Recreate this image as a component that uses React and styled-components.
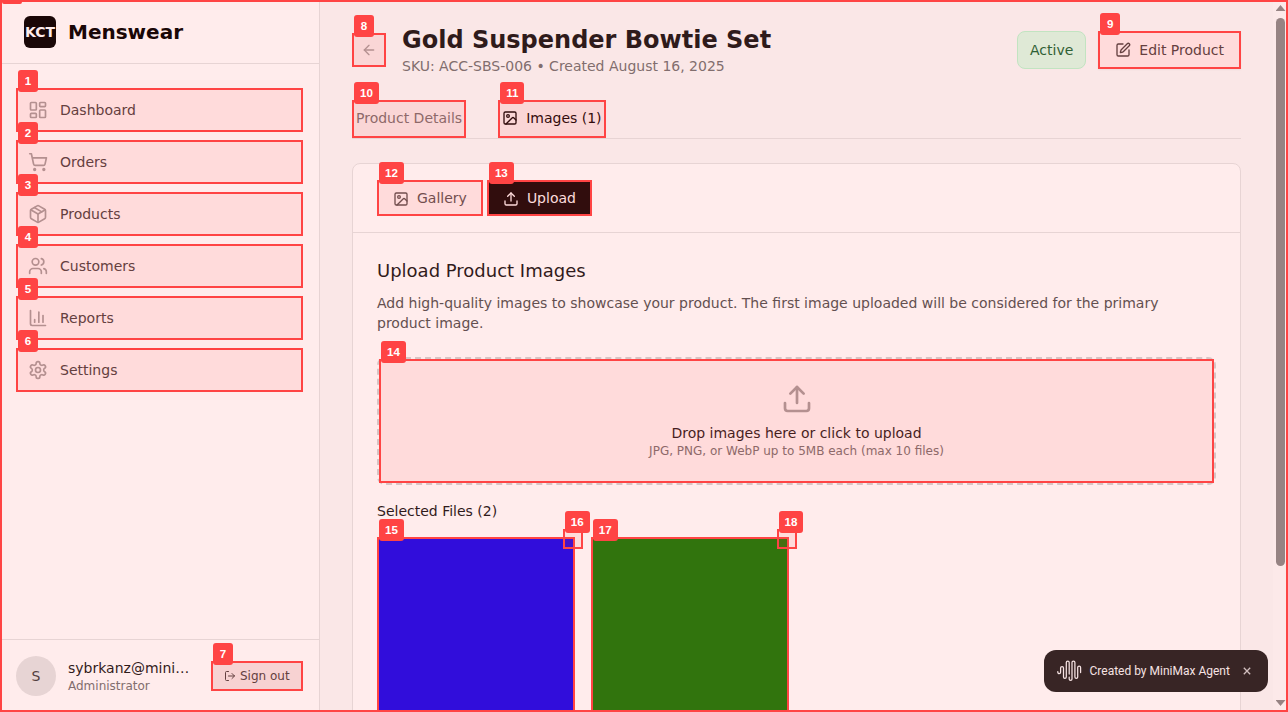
import React from "react";
import styled, { createGlobalStyle, css } from "styled-components";
import {
  LayoutDashboard, ShoppingCart, Package, Users, ChartColumn,
  LogOut, ArrowLeft, SquarePen, Image as ImageIcon, Upload,
} from "lucide-react";

const Global = createGlobalStyle`
  *, *::before, *::after { box-sizing: border-box; }
  body {
    margin: 0;
    overflow: hidden;
    background: #fff;
    color: #171717;
    font-family: "DejaVu Sans", sans-serif;
    font-size: 14px;
    line-height: 20px;
  }
  h1, h2, h3, p { margin: 0; font-weight: 400; }
  button { font: inherit; color: inherit; background: none; border: 0; padding: 0; }
  svg { display: block; flex: none; }
`;

const Screen = styled.div`
  position: relative;
  display: flex;
  width: 100vw;
  height: 100vh;
  overflow: hidden;
`;

/* annotation overlay */
const Outline = styled.span`
  position: absolute;
  inset: 0;
  border: 2px solid #ff4444;
  background: rgba(255, 68, 68, 0.1);
  pointer-events: none;
  ${(p) => p.$screen && css`z-index: 20;`}
`;
const Badge = styled.span`
  position: absolute;
  z-index: 30;
  top: -20px;
  left: 0;
  min-width: 20px;
  height: 22px;
  padding: 0 6px;
  border-radius: 3px;
  background: #ff4444;
  color: #fff;
  text-align: center;
  font: 700 11.6px/22px "Liberation Sans", sans-serif;
`;
const CornerTab = styled.span`
  position: absolute;
  top: 0;
  left: 0;
  width: 20px;
  height: 2px;
  border-radius: 0 0 3px 3px;
  background: #ff4444;
`;
const Mark = ({ n }) => (
  <Outline>
    <Badge>{n}</Badge>
  </Outline>
);

/* sidebar */
const Sidebar = styled.aside`
  display: flex;
  flex-direction: column;
  flex: none;
  width: 320px;
  border-right: 1px solid #e5e5e5;
`;
const Brand = styled.div`
  display: flex;
  align-items: center;
  gap: 12px;
  height: 64px;
  padding: 0 24px;
  border-bottom: 1px solid #e5e5e5;
  color: #000;
  font-size: 20px;
  line-height: 28px;
  font-weight: 700;
`;
const Logo = styled.div`
  display: flex;
  align-items: center;
  justify-content: center;
  width: 32px;
  height: 32px;
  border-radius: 6px;
  background: #000;
  color: #fff;
  font-size: 14px;
`;
const Nav = styled.nav`
  display: flex;
  flex-direction: column;
  flex: 1;
  gap: 8px;
  padding: 24px 16px;
`;
const NavItem = styled.a`
  position: relative;
  display: flex;
  align-items: center;
  gap: 12px;
  height: 44px;
  padding: 0 12px;
  color: #404040;
  svg { color: #a3a3a3; }
`;
const Account = styled.div`
  display: flex;
  align-items: center;
  height: 73px;
  padding: 0 16px;
  border-top: 1px solid #e5e5e5;
`;
const Avatar = styled.div`
  display: flex;
  align-items: center;
  justify-content: center;
  width: 40px;
  height: 40px;
  border-radius: 50%;
  background: #e5e5e5;
  color: #404040;
`;
const Identity = styled.div`
  flex: 1;
  min-width: 0;
  margin: 0 20px 0 12px;
`;
const UserName = styled.p`
  white-space: nowrap;
`;
const Role = styled.p`
  font-size: 12px;
  line-height: 16px;
  color: #737373;
`;
const SignOut = styled.button`
  position: relative;
  display: flex;
  align-items: center;
  gap: 4px;
  width: 92px;
  height: 30px;
  padding: 0 13px;
  background: #f5f5f5;
  color: #404040;
  font-size: 12px;
  line-height: 16px;
  white-space: nowrap;
`;

/* main column */
const Main = styled.main`
  flex: 1;
  min-width: 0;
  padding: 24px 32px;
  background: #fafafa;
`;
const PageHead = styled.header`
  display: flex;
  align-items: center;
  height: 52px;
`;
const Back = styled.button`
  position: relative;
  display: flex;
  align-items: center;
  justify-content: center;
  width: 34px;
  height: 34px;
  margin-right: 16px;
  color: #a3a3a3;
`;
const Heading = styled.div`
  flex: 1;
`;
const Title = styled.h1`
  font-size: 24px;
  line-height: 32px;
  font-weight: 700;
`;
const Meta = styled.p`
  color: #737373;
`;
const Status = styled.span`
  height: 38px;
  padding: 8px 12px;
  margin-right: 12px;
  border: 1px solid #bbf7d0;
  border-radius: 8px;
  background: #dcfce7;
  color: #166534;
`;
const EditButton = styled.button`
  position: relative;
  display: flex;
  align-items: center;
  gap: 8px;
  height: 38px;
  padding: 0 17px;
  background: #fff;
  box-shadow: 0 1px 2px rgba(0, 0, 0, 0.05);
  color: #404040;
`;
const Tabs = styled.div`
  display: flex;
  gap: 32px;
  margin-top: 24px;
  border-bottom: 1px solid #e5e5e5;
`;
const Tab = styled.button`
  position: relative;
  display: flex;
  align-items: center;
  gap: 8px;
  height: 38px;
  padding: 0 4px 2px;
  color: ${(p) => (p.$active ? "#000" : "#737373")};
`;
const Card = styled.section`
  margin-top: 24px;
  border: 1px solid #e5e5e5;
  border-radius: 8px;
  background: #fff;
`;
const Modes = styled.div`
  display: flex;
  gap: 4px;
  padding: 16px 24px;
  border-bottom: 1px solid #e5e5e5;
`;
const Mode = styled.button`
  position: relative;
  display: flex;
  align-items: center;
  gap: 8px;
  height: 36px;
  padding: 0 16px;
  background: ${(p) => (p.$active ? "#000" : "#fff")};
  color: ${(p) => (p.$active ? "#fff" : "#525252")};
  svg { margin-top: 2px; }
`;
const CardBody = styled.div`
  padding: 24px;
`;
const SectionTitle = styled.h2`
  font-size: 18px;
  line-height: 28px;
`;
const Hint = styled.p`
  margin-top: 8px;
  color: #525252;
`;
const DropZone = styled.div`
  position: relative;
  display: flex;
  flex-direction: column;
  align-items: center;
  margin-top: 24px;
  padding: 24px;
  border: 2px dashed #d4d4d4;
  border-radius: 8px;
  svg { margin-bottom: 8px; color: #a3a3a3; }
`;
const Limits = styled.p`
  font-size: 12px;
  line-height: 16px;
  color: #737373;
`;
const FilesTitle = styled.h3`
  margin-top: 16px;
  font-size: 14px;
`;
const Files = styled.div`
  display: grid;
  grid-template-columns: repeat(4, 1fr);
  gap: 16px;
  margin-top: 16px;
`;
const Tile = styled.div`
  position: relative;
  aspect-ratio: 1;
  background: ${(p) => p.$color};
`;
const Remove = styled.span`
  position: absolute;
  top: -8px;
  right: -8px;
  width: 20px;
  height: 20px;
`;

const ScrollTrack = styled.div`
  display: flex;
  flex-direction: column;
  align-items: center;
  flex: none;
  width: 15px;
  padding: 5px 0 6px;
  background: #fcfcfc;
`;
const Thumb = styled.div`
  width: 9px;
  height: 548px;
  margin: 7px 0 auto;
  border-radius: 5px;
  background: #8b8b8b;
`;
const Arrow = styled.div`
  width: 10px;
  height: 6px;
  background: #8b8b8b;
  clip-path: ${(p) => (p.$up ? "polygon(50% 0, 100% 100%, 0 100%)" : "polygon(0 0, 100% 0, 50% 100%)")};
`;

const Toast = styled.div`
  position: absolute;
  right: 20px;
  bottom: 20px;
  z-index: 10;
  display: flex;
  align-items: center;
  width: 224px;
  height: 42px;
  padding: 0 16px 0 13px;
  border-radius: 12px;
  background: #222;
  color: #f5f5f5;
  font: 400 12px/18px Roboto, sans-serif;
`;
const ToastText = styled.span`
  flex: 1;
  margin-left: 7.5px;
  white-space: nowrap;
`;

const Wave = () => (
  <svg width="25" height="22" viewBox="0 0 25 22" fill="none" stroke="currentColor" strokeWidth="1.25" strokeLinecap="round">
    <path d="M.8 11.500v.7a1.400 1.400 0 0 0 2.800 0V8a1.450 1.450 0 0 1 2.900 0v9a1.400 1.400 0 0 0 2.800 0V2.500a1.450 1.450 0 0 1 2.900 0V14" />
    <path d="M12.200 17v2a1.400 1.400 0 0 0 2.800 0V2.500a1.450 1.450 0 0 1 2.900 0V17a1.400 1.400 0 0 0 2.800 0V7.500a1.450 1.450 0 0 1 2.900 0V12.500" />
  </svg>
);

const Gear = ({ size }) => (
  <svg width={size} height={size} viewBox="0 0 24 24" fill="none" stroke="currentColor" strokeWidth="2" strokeLinecap="round" strokeLinejoin="round">
    <path d="M12.22 2h-.44a2 2 0 0 0-2 2v.18a2 2 0 0 1-1 1.73l-.43.25a2 2 0 0 1-2 0l-.15-.08a2 2 0 0 0-2.73.73l-.22.38a2 2 0 0 0 .73 2.73l.15.1a2 2 0 0 1 1 1.72v.51a2 2 0 0 1-1 1.74l-.15.09a2 2 0 0 0-.73 2.73l.22.38a2 2 0 0 0 2.73.73l.15-.08a2 2 0 0 1 2 0l.43.25a2 2 0 0 1 1 1.73V20a2 2 0 0 0 2 2h.44a2 2 0 0 0 2-2v-.18a2 2 0 0 1 1-1.73l.43-.25a2 2 0 0 1 2 0l.15.08a2 2 0 0 0 2.73-.73l.22-.39a2 2 0 0 0-.73-2.73l-.15-.08a2 2 0 0 1-1-1.74v-.5a2 2 0 0 1 1-1.74l.15-.09a2 2 0 0 0 .73-2.73l-.22-.38a2 2 0 0 0-2.73-.73l-.15.08a2 2 0 0 1-2 0l-.43-.25a2 2 0 0 1-1-1.73V4a2 2 0 0 0-2-2z" />
    <circle cx="12" cy="12" r="3" />
  </svg>
);

const navItems = [
  ["Dashboard", LayoutDashboard],
  ["Orders", ShoppingCart],
  ["Products", Package],
  ["Customers", Users],
  ["Reports", ChartColumn],
  ["Settings", Gear],
];

export default function App() {
  return (
    <Screen>
      <Global />
      <Sidebar>
        <Brand><Logo>KCT</Logo>Menswear</Brand>
        <Nav>
          {navItems.map(([label, Icon], i) => (
            <NavItem key={label}>
              <Icon size={20} />
              {label}
              <Mark n={i + 1} />
            </NavItem>
          ))}
        </Nav>
        <Account>
          <Avatar>S</Avatar>
          <Identity>
            <UserName>sybrkanz@mini…</UserName>
            <Role>Administrator</Role>
          </Identity>
          <SignOut><LogOut size={12} />Sign out<Mark n={7} /></SignOut>
        </Account>
      </Sidebar>

      <Main>
        <PageHead>
          <Back><ArrowLeft size={16} /><Mark n={8} /></Back>
          <Heading>
            <Title>Gold Suspender Bowtie Set</Title>
            <Meta>SKU: ACC-SBS-006 • Created August 16, 2025</Meta>
          </Heading>
          <Status>Active</Status>
          <EditButton><SquarePen size={16} />Edit Product<Mark n={9} /></EditButton>
        </PageHead>
        <Tabs>
          <Tab>Product Details<Mark n={10} /></Tab>
          <Tab $active><ImageIcon size={16} />Images (1)<Mark n={11} /></Tab>
        </Tabs>
        <Card>
          <Modes>
            <Mode><ImageIcon size={16} />Gallery<Mark n={12} /></Mode>
            <Mode $active><Upload size={16} />Upload<Mark n={13} /></Mode>
          </Modes>
          <CardBody>
            <SectionTitle>Upload Product Images</SectionTitle>
            <Hint>
              Add high-quality images to showcase your product. The first image uploaded will be considered for the primary product image.
            </Hint>
            <DropZone>
              <Upload size={32} />
              <p>Drop images here or click to upload</p>
              <Limits>JPG, PNG, or WebP up to 5MB each (max 10 files)</Limits>
              <Mark n={14} />
            </DropZone>
            <FilesTitle>Selected Files (2)</FilesTitle>
            <Files>
              <Tile $color="#0000ff"><Mark n={15} /><Remove><Mark n={16} /></Remove></Tile>
              <Tile $color="#008000"><Mark n={17} /><Remove><Mark n={18} /></Remove></Tile>
            </Files>
          </CardBody>
        </Card>
      </Main>

      <ScrollTrack>
        <Arrow $up />
        <Thumb />
        <Arrow />
      </ScrollTrack>

      <Toast>
        <Wave />
        <ToastText>Created by MiniMax Agent</ToastText>
        <svg width="10" height="10" viewBox="0 0 10 10" stroke="#ccc" strokeWidth="1.300">
          <path d="M1.800 1.800l6.400 6.400M8.200 1.800L1.800 8.200" />
        </svg>
      </Toast>
      <Outline $screen><CornerTab /></Outline>
    </Screen>
  );
}
